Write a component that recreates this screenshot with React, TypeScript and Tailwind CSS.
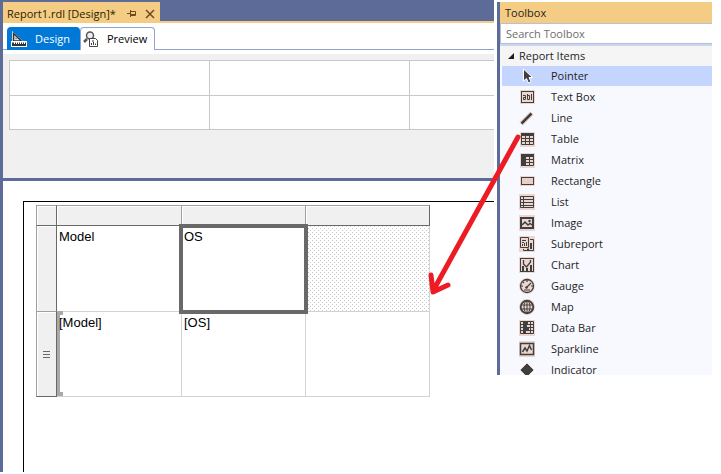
import React, { useState } from "react";

const INK = "#3f3f3f";
const HALO = "#ecd6ce";

function Icon({ children }: { children: React.ReactNode }) {
  return (
    <svg width="16" height="16" viewBox="0 0 16 16" className="shrink-0" aria-hidden="true">
      {children}
    </svg>
  );
}

const Tile = () => <rect x="0" y="0" width="16" height="16" fill={HALO} />;

const items: { name: string; icon: React.ReactNode }[] = [
  {
    name: "Pointer",
    icon: (
      <path d="M4.500 1v12l3-2.500 2 4.500 2.500-1-2-4.500h3.500z" fill={INK} stroke="#fff" />
    ),
  },
  {
    name: "Text Box",
    icon: (
      <>
        <rect x="1" y="1" width="15" height="14" fill={HALO} />
        <rect x="2.500" y="2.500" width="12" height="11" fill="none" stroke={INK} />
        <path d="M4 6.500h2.500v4M6 10.500H4.500v-2H6M8.500 5v5.500h2v-4H9M12.500 5v6" fill="none" stroke={INK} />
      </>
    ),
  },
  {
    name: "Line",
    icon: (
      <>
        <path d="M2 14L13 3" stroke={HALO} strokeWidth="5" />
        <path d="M2.500 13.500L12.500 3.500" stroke={INK} strokeWidth="2.500" />
      </>
    ),
  },
  {
    name: "Table",
    icon: (
      <>
        <rect x="1" y="1" width="15" height="15" fill={HALO} />
        <path d="M2 2h13v3H2z" fill={INK} />
        <path d="M2.500 5v8.500h12V5M6.500 5v8M10.500 5v8M3 7.500h11M3 10.500h11" fill="none" stroke={INK} />
      </>
    ),
  },
  {
    name: "Matrix",
    icon: (
      <>
        <rect x="1" y="1" width="15" height="15" fill={HALO} />
        <path d="M2 2h13v3H6v9H2z" fill={INK} />
        <path d="M14.500 5v8.500H6M10.500 5v8M6.500 5v8M7 7.500h7M7 10.500h7" fill="none" stroke={INK} />
      </>
    ),
  },
  {
    name: "Rectangle",
    icon: (
      <>
        <rect x="1" y="3" width="15" height="10" fill={HALO} />
        <rect x="2.500" y="4.500" width="12" height="7" fill="#e8d0c8" stroke={INK} />
      </>
    ),
  },
  {
    name: "List",
    icon: (
      <>
        <Tile />
        <path d="M1.500 2.500h13v11h-13zM4.500 3v10M2 5.500h12M2 8.500h12M2 11.500h12" fill="none" stroke={INK} />
      </>
    ),
  },
  {
    name: "Image",
    icon: (
      <>
        <Tile />
        <rect x="2" y="3" width="12" height="10" fill="none" stroke={INK} strokeWidth="2" />
        <path d="M3 10l3-3 3 3 2-1.500 2 1.500" fill="none" stroke={INK} strokeWidth="1.500" />
        <circle cx="10.500" cy="6" r="1.200" fill={INK} />
      </>
    ),
  },
  {
    name: "Subreport",
    icon: (
      <>
        <Tile />
        <path d="M1.500 1.500h8v10h-8zM3 4.500h4M3 6.500h2M11 3.500h3.500v11h-10V13M3.500 10V8M5.500 10V7M7.500 10V6" fill="none" stroke={INK} />
        <path d="M12 7v6M8 13.500h2" stroke={INK} strokeWidth="2" />
      </>
    ),
  },
  {
    name: "Chart",
    icon: (
      <>
        <Tile />
        <rect x="1.500" y="1.500" width="13" height="13" fill="none" stroke={INK} />
        <path d="M4 14V9M8 14v-3M12 14V8" stroke={INK} strokeWidth="2" />
        <path d="M4.500 3v4l3 3 4-5V3" fill="none" stroke={INK} strokeWidth="1.300" />
      </>
    ),
  },
  {
    name: "Gauge",
    icon: (
      <>
        <circle cx="8" cy="8" r="8" fill={HALO} />
        <circle cx="8" cy="8" r="6.500" fill="none" stroke={INK} strokeWidth="1.300" />
        <path d="M7 10l5-5M8 2v2M2 8h2M12 8h2M4 4l1 1M5 12h6" stroke={INK} strokeWidth="1.200" />
        <circle cx="7.500" cy="9.500" r="1.200" fill={INK} />
      </>
    ),
  },
  {
    name: "Map",
    icon: (
      <>
        <circle cx="8" cy="8" r="8" fill={HALO} />
        <circle cx="8" cy="8" r="6.300" fill="none" stroke={INK} strokeWidth="1.800" />
        <ellipse cx="8" cy="8" rx="3" ry="6" fill="none" stroke={INK} />
        <path d="M8 2v12M2 6h12M2 10h12" stroke={INK} />
      </>
    ),
  },
  {
    name: "Data Bar",
    icon: (
      <>
        <Tile />
        <path d="M1.500 1.500h13v12h-13zM4.500 2v11M11.500 2v11M2 4.500h12M2 7.500h12M2 10.500h12" fill="none" stroke={INK} />
        <path d="M5 2h4v3H8v3h2v3H7v3H5z" fill={INK} />
      </>
    ),
  },
  {
    name: "Sparkline",
    icon: (
      <>
        <Tile />
        <rect x="1.500" y="2.500" width="13" height="11" fill="none" stroke={INK} strokeWidth="1.500" />
        <path d="M3.500 11l2.500-4 2 3 2.500-5.500L12.500 9" fill="none" stroke={INK} strokeWidth="1.500" />
      </>
    ),
  },
  {
    name: "Indicator",
    icon: <path d="M8 1l7 7-7 7-7-7z" fill={INK} stroke={HALO} />,
  },
];

function DesignIcon() {
  return (
    <svg width="16" height="16" viewBox="0 0 16 16" aria-hidden="true">
      <path d="M1 0l12 11H1z" fill="#fff" />
      <path d="M2.500 2.500v7.500h8z" fill="#ddd" stroke="#333" strokeWidth="1.500" />
      <path d="M4.500 6.500v1.500h2z" fill="#0078d7" />
      <path d="M0 10h16v6H0z" fill="#fff" />
      <path d="M1 11.500h14v3.500H1z" fill="#333" />
      <path d="M3.500 11v2M5.500 11v2M7.500 11v2M9.500 11v2M11.500 11v2M13.500 11v2" stroke="#fff" />
    </svg>
  );
}

function PreviewIcon() {
  return (
    <svg width="16" height="16" viewBox="0 0 16 16" aria-hidden="true">
      <path d="M1 11l3-3" stroke="#555" strokeWidth="2.500" />
      <circle cx="7" cy="4.500" r="3.500" fill="#eee" stroke="#555" strokeWidth="1.500" />
      <path d="M6.500 7.500h6l2 2v6h-8z" fill="#fff" stroke="#444" />
      <path d="M8.500 14v-2M10.500 14v-3M12.500 14v-1.500M9 10h2" stroke="#444" />
    </svg>
  );
}

function EditorPane() {
  const [tab, setTab] = useState("Design");
  return (
    <main className="flex min-w-0 flex-1 flex-col bg-[#5d6b99] pl-[3px] pt-[2px]">
      <div className="flex border-b-2 border-[#f5cc84]">
        <div className="flex h-[19px] w-[157px] items-center bg-[#f5cc84] pl-1 pt-1 text-[#2b1d00]">
          <span className="w-[120px] whitespace-nowrap">Report1.rdl [Design]*</span>
          <button aria-label="Pin tab" className="w-[18px]">
            <svg width="9" height="9" viewBox="0 0 9 9" fill="none" stroke="#6b4a20" aria-hidden="true">
              <path d="M0 4.500h3M3.500 1v7M4 2.500h4.500v4H4M4 5.500h4" />
            </svg>
          </button>
          <button aria-label="Close tab">
            <svg width="10" height="10" viewBox="0 0 10 10" stroke="#6b4a20" strokeWidth="1.500" aria-hidden="true">
              <path d="M1 1l8 8M9 1L1 9" />
            </svg>
          </button>
        </div>
      </div>

      <div className="bg-white pb-1">
        <div className="flex h-[27px] items-end border-b border-[#8fa3cc] pl-1">
          <button
            onClick={() => setTab("Design")}
            aria-pressed={tab === "Design"}
            className="-mb-px flex h-[23px] w-[73px] items-center gap-2 rounded-t-sm bg-[#0078d7] pl-1 text-white"
          >
            <DesignIcon />
            Design
          </button>
          <button
            onClick={() => setTab("Preview")}
            aria-pressed={tab === "Preview"}
            className="-mb-px flex h-[23px] w-[75px] items-center gap-2 rounded-t-sm border border-b-0 border-[#8fa3cc] bg-white pl-[2px] text-black"
          >
            <PreviewIcon />
            Preview
          </button>
        </div>
      </div>

      <div className="bg-[#f0f0f0] pb-12 pl-[6px] pt-[6px]">
        <div className="grid grid-cols-[200px_200px_1fr] grid-rows-[35px_34px] border-l border-t border-[#c8c8c8] bg-white">
          {["a1", "a2", "a3", "b1", "b2", "b3"].map((k) => (
            <div key={k} className="border-b border-r border-[#c8c8c8] nth-[3n]:border-r-0" />
          ))}
        </div>
      </div>

      <div className="mt-[3px] flex flex-1 flex-col bg-white pl-5 pt-5">
        <div className="flex-1 border-l border-t border-black pl-3 pt-[3px]">
          <ReportTable />
        </div>
      </div>
    </main>
  );
}

const header = "border-y border-r border-[#a0a0a0] border-b-[#696969] bg-[#f0f0f0] p-0 shadow-[inset_1px_1px_0_#fff]";
const handle = "border-x border-b border-l-[#a0a0a0] border-r-[#696969] bg-[#f0f0f0] p-0 shadow-[inset_1px_1px_0_#fff]";
const cell = "relative border-b border-r border-[#d3d3d3] p-0 pl-[2px] pt-[3px] text-left align-top";

function ReportTable() {
  return (
    <table className="w-[394px] table-fixed border-separate border-spacing-0 font-['Liberation_Sans',Arial,sans-serif] text-[13px] leading-4 text-black">
      <colgroup>
        <col className="w-[21px]" />
        <col className="w-[125px]" />
        <col className="w-[124px]" />
        <col className="w-[124px]" />
      </colgroup>
      <tbody>
        <tr className="h-[21px]">
          <td className={`${header} border-l border-r-[#696969]`} />
          <td className={header} />
          <td className={header} />
          <td className={`${header} border-r-[#696969]`} />
        </tr>
        <tr className="h-[86px]">
          <td className={`${handle} border-b-[#a0a0a0]`} />
          <td className={cell}>Model</td>
          <td className={`${cell} z-10`}>
            OS
            <span className="pointer-events-none absolute -bottom-[3px] -left-[3px] -right-[3px] -top-[2px] border-4 border-[#696969]" />
          </td>
          <td
            className={`${cell} bg-[conic-gradient(from_0deg_at_1px_1px,transparent_75%,#c8c8c8_0),conic-gradient(from_0deg_at_1px_1px,transparent_75%,#c8c8c8_0)] bg-[position:0_0,2px_2px] bg-[size:4px_4px]`}
          />
        </tr>
        <tr className="h-[85px]">
          <td className={`${handle} border-b-[#696969] align-middle`}>
            <svg width="7" height="7" viewBox="0 0 7 7" className="mx-auto" stroke="#696969" aria-hidden="true">
              <path d="M0 .5h7M0 3.500h7M0 6.500h7" />
            </svg>
          </td>
          <td className={cell}>
            <span className="absolute -top-px bottom-0 left-0 w-[6px] border-y-4 border-[#a9a9a9]" />
            <span className="absolute inset-y-0 left-0 w-[3px] bg-[#a9a9a9]" />
            <span className="relative">[Model]</span>
          </td>
          <td className={cell}>[OS]</td>
          <td className={cell} />
        </tr>
      </tbody>
    </table>
  );
}

function Toolbox() {
  const [selected, setSelected] = useState("Pointer");
  return (
    <aside className="mr-[9px] mt-[2px] h-[373px] w-[215px] shrink-0 overflow-hidden border-l-[3px] border-[#5d6b99] bg-[#f8f9ff] text-[#1e1e1e]">
      <h2 className="h-[21px] bg-[#f5cc84] pl-[5px] leading-[21px]">Toolbox</h2>
      <input
        aria-label="Search Toolbox"
        placeholder="Search Toolbox"
        className="block h-[21px] w-full border border-r-0 border-[#b8bfd8] bg-white pl-[5px] text-[#1e1e1e] outline-none placeholder:text-[#6d6d6d]"
      />
      <div className="border-t-2 border-[#ccd5f0]">
        <h3 className="flex h-5 items-center gap-[5px] bg-[#f5f5f5] pl-2">
          <svg width="6" height="6" viewBox="0 0 6 6" aria-hidden="true">
            <path d="M6 0v6H0z" fill="#1e1e1e" />
          </svg>
          Report Items
        </h3>
        <ul className="pl-[2px] leading-[10px]">
          {items.map((item) => (
            <li key={item.name} className="h-[21px]">
              <button
                onClick={() => setSelected(item.name)}
                className={`flex h-5 w-full items-center gap-4 pl-[17px] text-left ${selected === item.name ? "bg-[#c4d5ff]" : ""}`}
              >
                <Icon>{item.icon}</Icon>
                {item.name}
              </button>
            </li>
          ))}
        </ul>
      </div>
    </aside>
  );
}

export default function App() {
  return (
    <div className="relative flex h-screen gap-[3px] bg-white pb-[2px] font-['Open_Sans','Noto_Sans',sans-serif] text-[11px] leading-4">
      <EditorPane />
      <Toolbox />
      <svg
        className="pointer-events-none absolute right-[198px] top-[130px]"
        width="95"
        height="168"
        viewBox="0 0 95 168"
        fill="none"
        stroke="#ed1c24"
        strokeWidth="5"
        strokeLinecap="round"
        strokeLinejoin="round"
        aria-hidden="true"
      >
        <path d="M90 7L5 161M3 145l2 17 15-7" />
      </svg>
    </div>
  );
}
